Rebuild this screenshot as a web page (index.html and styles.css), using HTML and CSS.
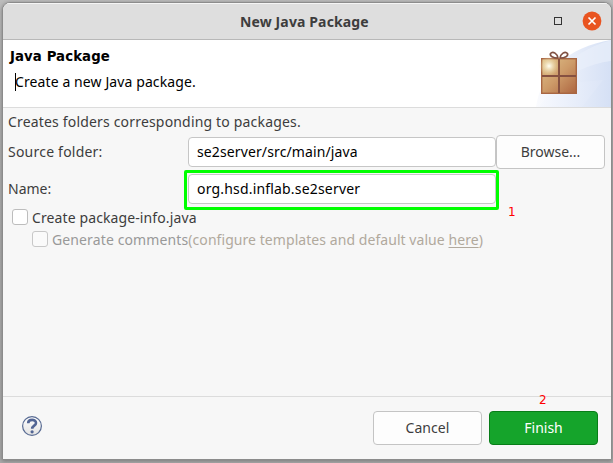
FILE: index.html
```html
<!DOCTYPE html>
<html lang="en">
<head>
<meta charset="utf-8">
<title>New Java Package</title>
<link rel="stylesheet" href="styles.css">
</head>
<body>
<main class="window">
  <header class="titlebar">
    <h1 class="window-title">New Java Package</h1>
    <span class="maximize"></span>
    <svg class="close" width="20" height="20" viewBox="0 0 20 20"><circle cx="10" cy="10" r="9.4" fill="#e95420"/><path d="M6.5 6.5l7 7M13.5 6.5l-7 7" stroke="#fff" stroke-width="1.7"/></svg>
  </header>
  <section class="banner">
    <div class="banner-text">
      <h2 class="heading">Java Package</h2>
      <p class="message"><span class="t-message">Create a new Java package.</span></p>
    </div>
    <svg class="art" width="75" height="67" viewBox="0 0 75 67">
      <defs>
        <linearGradient id="sky" x1="0" x2="1"><stop offset="0" stop-color="#fafbfe"/><stop offset="1" stop-color="#d5e0f5"/></linearGradient>
        <linearGradient id="ray" x1="0" x2="1"><stop offset="0" stop-color="#f7f9fe"/><stop offset="1" stop-color="#dce5f7"/></linearGradient>
        <linearGradient id="box" x1="0" y1="0" x2="1" y2="1"><stop offset="0" stop-color="#e0c28b"/><stop offset=".5" stop-color="#cd9b69"/><stop offset="1" stop-color="#ad6540"/></linearGradient>
        <radialGradient id="shine"><stop offset="0" stop-color="#fffff5"/><stop offset="1" stop-color="#efdda0" stop-opacity="0"/></radialGradient>
      </defs>
      <path d="M0 67C5 32 32 7 75 0V67Z" fill="url(#sky)"/>
      <path d="M19 48Q43 25 75 21V0Q42 10 19 33Z" fill="#eaf0fb" opacity=".65"/>
      <path d="M20 44L67 40L46 67H3Z" fill="url(#ray)"/>
      <rect x="5.7" y="18.7" width="34.6" height="34.6" fill="url(#box)" stroke="#a86643" stroke-width="1.4"/>
      <circle cx="13" cy="26" r="10" fill="url(#shine)"/>
      <path d="M23 19V53M6 36H40" stroke="#865141" stroke-width="2"/>
      <path d="M22 18C17 18 13.5 16 14.5 13.5C17 10.5 21.5 14 22 18M24 18C29 18 32.5 16 31.5 13.5C29 10.5 24.5 14 24 18" fill="none" stroke="#805143" stroke-width="1.7"/>
    </svg>
  </section>
  <section class="content">
    <p class="intro"><span class="t-intro">Creates folders corresponding to packages.</span></p>
    <div class="row source"><label class="t-source">Source folder:</label><div class="field"><span class="t-path">se2server/src/main/java</span></div><button class="button browse"><span class="t-browse">Browse...</span></button></div>
    <div class="row name"><label class="t-name">Name:</label><div class="field marked"><span class="t-org">org.hsd.inflab.se2server</span></div><span class="step one">1</span></div>
    <div class="check"><i class="box"></i><span class="t-info">Create package-info.java</span></div>
    <div class="check disabled"><i class="box"></i><span class="t-gen">Generate comments</span><span class="t-conf">(configure templates and default value <u>here</u>)</span></div>
  </section>
  <footer class="footer">
    <svg class="help" width="22" height="22" viewBox="0 0 22 22"><defs><linearGradient id="hg" x1="0" y1="0" x2="0" y2="1"><stop offset="0" stop-color="#fff"/><stop offset="1" stop-color="#e2e2e2"/></linearGradient></defs><circle cx="11" cy="11" r="9.4" fill="url(#hg)" stroke="#586b93" stroke-width="1.2"/><path d="M7.2 8.2C7.2 3.8 15 3.9 15 8C15 10.7 11.2 10.6 11.2 13.8" fill="none" stroke="#526594" stroke-width="2.6"/><circle cx="11.1" cy="16.8" r="1.6" fill="#526594"/></svg>
    <button class="button cancel"><span class="t-cancel">Cancel</span></button>
    <button class="button finish"><span class="t-finish">Finish</span></button>
    <span class="step two">2</span>
  </footer>
</main>
</body>
</html>
```
FILE: styles.css
```css
* { box-sizing: border-box; }
body { margin: 0; width: 613px; height: 463px; padding: 2px 1px 3px 2px; overflow: hidden; background: linear-gradient(#bdbdbd, #b0b0b0 30%, #aaa); font: 14px/20px "Noto Sans", sans-serif; color: #3d3d3d; }
h1, h2, p { margin: 0; }
.window { width: 610px; height: 458px; display: flex; flex-direction: column; border: 1px solid #8c8c8c; border-radius: 8px 8px 0 0; overflow: hidden; background: #f7f7f7; box-shadow: 0 1px 4px #777; }
.titlebar { height: 37px; flex: none; display: flex; align-items: center; background: #dedede; border-bottom: 1px solid #b8b8b8; border-top: 1px solid #f5f5f5; padding-right: 9px; }
.window-title { margin-left: 237px; font-size: 14px; line-height: 20px; white-space: nowrap; letter-spacing: .13px; }
.maximize { width: 8px; height: 8px; border: 1px solid #333; margin: -1px 20px 0 auto; }
.close { flex: none; margin-top: -1px; }
.banner { height: 68px; flex: none; display: flex; justify-content: space-between; background: #fff; border-bottom: 1px solid #dcdcdc; }
.banner-text { padding: 8px 0 0 7px; color: #000; }
.heading { font: bold 13.3px/18px "DejaVu Sans", sans-serif; letter-spacing: .09px; white-space: nowrap; }
.message { margin: 7px 0 0 5px; height: 18px; line-height: 18px; border-left: 1px solid #000; white-space: nowrap; }
.t-message { margin-left: -1px; letter-spacing: .1px; }
.t-intro { letter-spacing: .175px; }
.t-source { letter-spacing: .22px; }
.t-path { letter-spacing: .12px; }
.t-org { letter-spacing: .18px; }
.t-info { letter-spacing: .11px; }
.t-gen { letter-spacing: .12px; }
.t-cancel { letter-spacing: .05px; }
.content { height: 288px; flex: none; padding: 4px 6px 0 5px; white-space: nowrap; }
.intro { height: 20px; line-height: 20px; }
.row { display: flex; align-items: center; }
.row label { width: 180px; flex: none; }
.source { height: 34px; margin-top: 3px; }
.name { height: 30px; margin-top: 5px; position: relative; }
.field { width: 308px; height: 30px; flex: none; display: flex; align-items: center; padding-left: 8px; border: 1px solid #c6c6c6; border-radius: 4px; background: #fff; color: #000; }
.marked { position: relative; }
.marked::after { content: ""; position: absolute; inset: -5px -4px -7px -5px; border: 3px solid #0f0; border-radius: 2px; }
.button { height: 34px; border: 1px solid #c4c4c4; border-radius: 4px; background: #fdfdfd; font: inherit; color: #3d3d3d; padding: 0; }
.browse { width: 109px; }
.step { position: absolute; font: 12px/14px "DejaVu Sans", sans-serif; color: #f00; }
.one { left: 500px; top: 31px; }
.check { display: flex; align-items: center; height: 22px; margin-left: 4px; }
.name + .check { margin-top: 2px; }
.box { width: 16px; height: 16px; border: 1px solid #bdbdbd; border-radius: 3px; background: #fff; margin-right: 4px; }
.disabled { margin-left: 24px; color: #999; }
.disabled .box { background: #fafafa; border-color: #c8c8c8; }
.t-info, .t-gen, .t-conf { position: relative; top: 1px; }
.t-conf { color: #b1a99d; letter-spacing: .06px; }
u { text-underline-offset: 2px; }
.footer { flex: 1; display: flex; align-items: center; position: relative; border-top: 1px solid #dcdcdc; padding: 0 13px 0 18px; }
.help { margin-top: -4px; }
.cancel { width: 109px; margin-left: auto; margin-right: 7px; }
.finish { width: 109px; background: #15a42b; border-color: #087d18; color: #fff; }
.two { left: 536px; top: -4px; }
```
